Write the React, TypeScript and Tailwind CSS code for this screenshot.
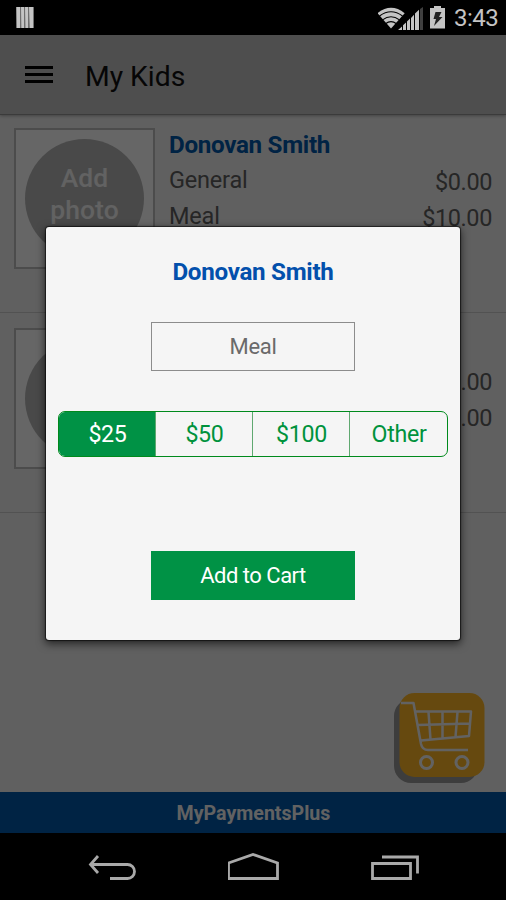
import React, { useState } from 'react';

type Account = { id: string; name?: string; balance: string };
type Kid = { id: number; name?: string; accounts: Account[] };

const kids: Kid[] = [
    { id: 1, name: 'Donovan Smith', accounts: [{ id: 'general', name: 'General', balance: '$0.00' }, { id: 'meal', name: 'Meal', balance: '$10.00' }] },
    { id: 2, accounts: [{ id: 'general', balance: '$0.00' }, { id: 'meal', balance: '$0.00' }] },
];

const amounts = ['$25', '$50', '$100', 'Other'];

const StatusBar: React.FC = () => (
    <div className="h-[35px] bg-black flex items-center pl-4 pr-[9px] text-[#c4c4c4]">
        <svg width="18" height="22" viewBox="0 0 18 22">
            <path d="M0 0h18v21H0z" fill="#6f6f6f" />
            <path d="M.5 0H4v21H1zM5 0h3v21H5.4zM9 0h3v21H9.5zM13 0h4v21h-3.200z" fill="#c4c4c4" />
        </svg>
        <div className="ml-auto flex items-center">
            <svg width="70" height="24" viewBox="0 0 70 24" className="mr-[6px]">
                {/* wifi */}
                <g transform="translate(-1 -5)">
                    <path d="M.5 12.200Q14 1.500 27.700 12.200L14 27.500Z" fill="#c4c4c4" />
                    <path d="M2.500 15Q14 6.500 25.500 15M5.500 18.900Q14 12.500 22.500 18.900M8.500 22.700Q14 18.600 19.500 22.700" fill="none" stroke="#000" strokeWidth="1.100" />
                </g>
                {/* signal */}
                <g fill="#c4c4c4">
                    <path d="M20 24l4-3.500V24zM25 24v-4.800l3-2.700V24zM29 24v-8.500l3-3V24zM33 24v-12l3-3.200V24zM37 24V7.500l4-3.700V24z" />
                    <path d="M42 24V3l3-2v23z" fill="#3f3f3f" />
                </g>
                {/* battery */}
                <path d="M56 0h7v2h4v20.500H52V2h4z" fill="#c4c4c4" />
                <path d="M57.500 6h6l-2.500 5h3.500L56 20l2-7h-2.500z" fill="#222" />
            </svg>
            <span className="w-[43px] text-[24px] leading-[35px] pt-[2px] tracking-[-0.5px] whitespace-nowrap">3:43</span>
        </div>
    </div>
);

const KidRow: React.FC<{ kid: Kid }> = ({ kid }) => (
    <div className="h-[200px] flex border-b border-[#cccccc] pt-[15px] px-[14px]">
        <div className="w-[141px] h-[141px] shrink-0 border-2 border-[#bdbdbd] bg-white pl-[9px] pt-[9px]">
            <div className="w-[119px] h-[119px] rounded-full bg-[#b7b7b7] flex flex-col items-center pt-[23px] text-[26.500px] leading-[32px] font-medium tracking-[0.1px] text-[#f4f4f4]">
                <span>Add</span>
                <span>photo</span>
            </div>
        </div>
        <div className="flex-1 ml-[14px] mt-px">
            <h2 className="h-8 text-[24.200px] leading-[32px] font-bold tracking-[-0.300px] text-[#0057aa]">{kid.name}</h2>
            {kid.accounts.map(account => (
                <div key={account.id} className="h-9 flex justify-between text-[23.500px] leading-9 tracking-[-0.400px] text-[#5f5f5f]">
                    <span className="pt-px tracking-[-0.200px]">{account.name}</span>
                    <span className="pt-[3px]">{account.balance}</span>
                </div>
            ))}
        </div>
    </div>
);

const CartButton: React.FC = () => (
    <button className="absolute left-[394px] top-[657px]">
        <svg width="92" height="92" viewBox="0 0 92 92">
            <rect x="0" y="7" width="84" height="84" rx="17" fill="#999" />
            <rect x="5.500" y="1" width="85" height="84" rx="15" fill="#ffb726" />
            <g fill="none" stroke="#f6f6f6" strokeWidth="2.500" strokeLinejoin="round">
                <path d="M7 11h12.500l7.500 41q1.300 6 7 6H74" />
                <path d="M22 19.500h55L75 44l-48 4.500M24 33l52-1.500M34.500 20l2 27.500M48.500 20v26M63.500 20l-2 25" />
                <circle cx="32.500" cy="70.500" r="6" strokeWidth="3" />
                <circle cx="68" cy="70.500" r="6" strokeWidth="3" />
            </g>
        </svg>
    </button>
);

const PaymentDialog: React.FC<{ kid: Kid }> = ({ kid }) => {
    const [amount, setAmount] = useState('$25');

    return (
        <div className="w-[414px] h-[413px] mb-px rounded-[3px] bg-[#f5f5f5] flex flex-col items-center px-3 shadow-[0_0_1px_1px_rgba(0,0,0,0.6),0_3px_9px_1px_rgba(0,0,0,0.6)]">
            <h2 className="mt-[29px] text-[24.200px] leading-[32px] font-bold tracking-[-0.300px] text-[#0350ac]">{kid.name}</h2>
            <div className="mt-[34px] w-[204px] h-[49px] shrink-0 border border-[#8c8c8c] text-center text-[22px] leading-[48px] tracking-[-0.300px] text-[#6a6a6a]">Meal</div>
            <div className="mt-[40px] w-[390px] h-[46px] shrink-0 grid grid-cols-4 overflow-hidden rounded-[7px] border border-[#008a1c]">
                {amounts.map(value => (
                    <button
                        key={value}
                        onClick={() => setAmount(value)}
                        className={`border-r border-[#5fa870] last:border-r-0 text-[23.200px] leading-[45px] tracking-[-0.300px] pl-px
                            ${amount === value ? 'bg-[#009245] text-white' : 'text-[#00923c]'}`}
                    >
                        {value}
                    </button>
                ))}
            </div>
            <button className="mt-[94px] w-[204px] h-[49px] shrink-0 bg-[#009245] text-white text-[22px] leading-[50px] tracking-[-0.500px]">Add to Cart</button>
        </div>
    );
};

const NavBar: React.FC = () => (
    <div className="h-[67px] bg-black flex items-center justify-between px-[87px] pt-[2px]">
        <svg width="50" height="30" viewBox="0 0 50 30" fill="none" stroke="#a9a9a9" strokeWidth="2.800">
            <path d="M11 3L3.500 11.500L11 20M3 11.500H40.500a7 7 0 0 1 0 14H23" />
        </svg>
        <svg width="52" height="30" viewBox="0 0 52 30" fill="none" stroke="#a9a9a9" strokeWidth="2.800">
            <path d="M.5 25.500V10L25 1.500L49.500 10V25.500Z" />
        </svg>
        <svg width="48" height="30" viewBox="0 0 48 30" fill="none" stroke="#a9a9a9" strokeWidth="2.800">
            <path d="M1.500 10.500h38v15h-38zM11 4h35.500v16.500" />
        </svg>
    </div>
);

const App: React.FC = () => {
    return (
        <div className="w-[506px] h-[900px] flex flex-col overflow-hidden bg-black font-[Roboto,sans-serif]">
            <StatusBar />
            <div className="relative h-[798px] flex flex-col bg-[#f0f0f0]">
                <header className="relative h-[80px] bg-[#c2c2c2] border-b border-[#949494] shadow-[0_1px_3px_rgba(0,0,0,0.3)] flex items-center pl-[25px] pt-[3px]">
                    <div className="w-7 flex flex-col gap-1 mt-[-3px]">
                        <span className="h-[3px] bg-black" />
                        <span className="h-[3px] bg-black" />
                        <span className="h-[3px] bg-black" />
                    </div>
                    <h1 className="ml-8 pt-px text-[28.300px] leading-10 text-[#101010]">My Kids</h1>
                </header>
                <main className="flex-1 -mt-[2px]">
                    {kids.map(kid => (
                        <KidRow key={kid.id} kid={kid} />
                    ))}
                </main>
                <CartButton />
                <footer className="h-[41px] bg-[#0057aa] pl-px text-center text-[19.600px] leading-[43px] font-bold text-[#f4f4f4]">MyPaymentsPlus</footer>

                {/* Dimmed backdrop */}
                <div className="absolute inset-0 bg-black/60 flex items-center justify-center">
                    <PaymentDialog kid={kids[0]} />
                </div>
            </div>
            <NavBar />
        </div>
    );
};

export default App;
